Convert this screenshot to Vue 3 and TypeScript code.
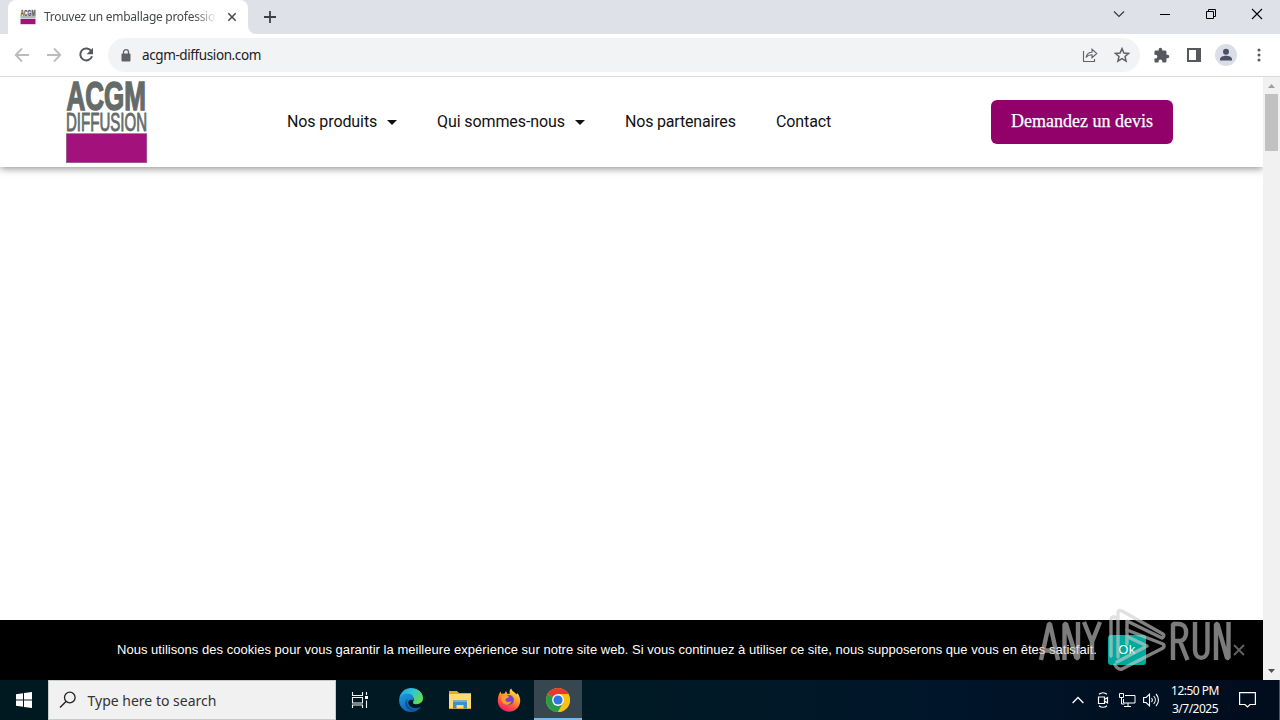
<script setup lang="ts">
interface NavItem {
  label: string
  menu: boolean
  cls: string
}

const navItems: NavItem[] = [
  { label: 'Nos produits', menu: true, cls: 'produits' },
  { label: 'Qui sommes-nous', menu: true, cls: 'sommes' },
  { label: 'Nos partenaires', menu: false, cls: 'partenaires' },
  { label: 'Contact', menu: false, cls: 'contact' },
]
</script>

<template>
  <div class="screen">
    <div class="tabstrip">
      <div class="tab">
        <svg class="favicon" width="16" height="16" viewBox="0 0 16 16">
          <text x="0.5" y="6.6" font-size="8.5" font-weight="700" fill="#555" stroke="#555" stroke-width="0.3" textLength="15" lengthAdjust="spacingAndGlyphs">ACGM</text>
          <rect x="0.5" y="7" width="15" height="2.6" fill="#b5b5b5" />
          <rect x="0.5" y="10" width="15" height="5.2" fill="#a3127c" />
        </svg>
        <span class="tab-title">Trouvez un emballage professionnel</span>
        <svg class="tab-close" width="10" height="10" viewBox="0 0 10 10"><path d="M1.3 1.3l7.4 7.4M8.7 1.3L1.3 8.7" stroke="#45494d" stroke-width="1.5" /></svg>
      </div>
      <svg class="tab-curve" width="8" height="8" viewBox="0 0 8 8"><path d="M0 0v8h8A8 8 0 0 1 0 0z" fill="#fff" /></svg>
      <svg class="new-tab" width="14" height="14" viewBox="0 0 14 14"><path d="M7 1v12M1 7h12" stroke="#3c4043" stroke-width="1.8" /></svg>
      <div class="window-controls">
        <svg width="46" height="28" viewBox="0 0 46 28"><path d="M18 11.5l5 5 5-5" fill="none" stroke="#333" stroke-width="1.1" /></svg>
        <svg width="46" height="28" viewBox="0 0 46 28"><path d="M18 14.5h10" stroke="#000" /></svg>
        <svg width="46" height="28" viewBox="0 0 46 28"><path d="M18.5 11.5h7v7h-7zM20.5 11.5v-2h7v7h-2" fill="none" stroke="#000" /></svg>
        <svg width="46" height="28" viewBox="0 0 46 28"><path d="M18 9l10 10M28 9l-10 10" stroke="#000" stroke-width="1.1" /></svg>
      </div>
    </div>

    <div class="toolbar">
      <svg class="tool" width="16" height="16" viewBox="0 0 16 16"><path d="M15 8H2M8 1.5L1.7 8 8 14.5" fill="none" stroke="#babcbe" stroke-width="1.8" /></svg>
      <svg class="tool" width="16" height="16" viewBox="0 0 16 16"><path d="M1 8h13M8 1.5L14.3 8 8 14.5" fill="none" stroke="#babcbe" stroke-width="1.8" /></svg>
      <svg class="tool" width="16" height="16" viewBox="0 0 16 16"><path d="M13.4 4.2A6 6 0 1 0 14 9.3" fill="none" stroke="#55595e" stroke-width="2" /><path d="M15 0.8v6.4H8.6z" fill="#55595e" /></svg>
      <div class="omnibox">
        <svg class="lock" width="10" height="13" viewBox="0 0 10 13"><rect x="0.5" y="4.5" width="9" height="8" rx="1" fill="#5f6368" /><path d="M2.5 5V3.2a2.5 2.5 0 0 1 5 0V5" fill="none" stroke="#5f6368" stroke-width="1.3" /></svg>
        <span class="url">acgm-diffusion.com</span>
        <svg class="share" width="16" height="16" viewBox="0 0 16 16"><path d="M1.5 4v10.5h11V12M4 10.5C4.7 7 7 5.2 10 5.2V2.3l4.8 4.2-4.8 4.2V7.8C7.5 7.8 5.5 8.5 4 10.5z" fill="none" stroke="#5f6368" stroke-width="1.1" /></svg>
        <svg class="star" width="16" height="16" viewBox="0 0 16 16"><path d="M8 1.6l1.9 4.4 4.7.4-3.6 3.1 1.1 4.6L8 11.7l-4.1 2.4L5 9.5 1.4 6.4 6.1 6z" fill="none" stroke="#5f6368" stroke-width="1.5" /></svg>
      </div>
      <svg class="puzzle" width="17" height="17" viewBox="0 0 24 24"><path d="M20.5 11H19V7a2 2 0 0 0-2-2h-4V3.5a2.500 2.500 0 0 0-5 0V5H4a2 2 0 0 0-2 2v3.800h1.500a2.700 2.700 0 0 1 0 5.400H2V20a2 2 0 0 0 2 2h3.800v-1.500a2.700 2.700 0 0 1 5.400 0V22H17a2 2 0 0 0 2-2v-4h1.500a2.500 2.500 0 0 0 0-5z" fill="#55595e" /></svg>
      <svg class="panel" width="14" height="14" viewBox="0 0 14 14"><path d="M0 0h14v14H0zM2 2v10h7V2z" fill="#55595e" fill-rule="evenodd" /></svg>
      <svg class="avatar" width="22" height="22" viewBox="0 0 22 22"><circle cx="11" cy="11" r="11" fill="#dcdee7" /><circle cx="11" cy="7.7" r="3" fill="#4b5165" /><path d="M5 16.5v-1.3c0-2.3 3.5-3.4 6-3.4s6 1.1 6 3.4v1.3z" fill="#4b5165" /></svg>
      <svg class="dots" width="4" height="16" viewBox="0 0 4 16"><circle cx="2" cy="3" r="1.5" fill="#55595e" /><circle cx="2" cy="8" r="1.5" fill="#55595e" /><circle cx="2" cy="13" r="1.5" fill="#55595e" /></svg>
    </div>

    <div class="viewport">
      <div class="page">
        <header class="site-header">
          <svg class="logo" width="82" height="84" viewBox="0 0 82 84">
            <text x="0.5" y="29.8" font-size="41" font-weight="700" fill="#656b69" stroke="#656b69" stroke-width="1.5" textLength="79.5" lengthAdjust="spacingAndGlyphs">ACGM</text>
            <text x="0" y="51.3" font-size="25" fill="#656b69" stroke="#656b69" stroke-width="0.9" textLength="81" lengthAdjust="spacingAndGlyphs">DIFFUSION</text>
            <rect x="0.3" y="53.7" width="80.5" height="29" fill="#a3127c" stroke="#8d6085" stroke-width="0.6" />
          </svg>
          <nav class="nav">
            <a v-for="item in navItems" :key="item.label" class="nav-item" :class="item.cls">
              <span>{{ item.label }}</span>
              <svg v-if="item.menu" width="10" height="5" viewBox="0 0 10 5"><path d="M0 0h10L5 5z" fill="#111" /></svg>
            </a>
          </nav>
          <a class="quote-button">Demandez un devis</a>
        </header>
        <main class="content"></main>
        <div class="cookie-bar">
          <span class="cookie-text">Nous utilisons des cookies pour vous garantir la meilleure expérience sur notre site web. Si vous continuez à utiliser ce site, nous supposerons que vous en êtes satisfait.</span>
          <span class="cookie-ok">Ok</span>
          <svg class="cookie-close" width="12" height="12" viewBox="0 0 12 12"><path d="M1 1l10 10M11 1L1 11" stroke="#626262" stroke-width="1.8" /></svg>
        </div>
      </div>
      <div class="scrollbar">
        <svg width="17" height="17" viewBox="0 0 17 17"><path d="M5 11h7L8.5 7z" fill="#a0a0a0" /></svg>
        <div class="thumb"></div>
        <svg class="arrow-down" width="17" height="17" viewBox="0 0 17 17"><path d="M5 6h7l-3.5 4z" fill="#505050" /></svg>
      </div>
    </div>

    <div class="taskbar">
      <div class="start">
        <svg width="16" height="16" viewBox="0 0 16 16"><path d="M0 2.3L7 1.3V7.5H0zM8 1.1L16 0v7.5H8zM0 8.5h7v6.2l-7-1zM8 8.5h8V16l-8-1.1z" fill="#fff" /></svg>
      </div>
      <div class="search">
        <svg width="18" height="18" viewBox="0 0 18 18"><circle cx="10.8" cy="6.5" r="5.3" fill="none" stroke="#222" stroke-width="1.3" /><path d="M7 10.5L1 16.5" stroke="#222" stroke-width="1.4" /></svg>
        <span>Type here to search</span>
      </div>
      <div class="app">
        <svg width="18" height="18" viewBox="0 0 18 18"><path d="M1.5 1v3.500h10V1M1.500 17v-3h10v3M1.500 6.500h10v5.500h-10zM15.500 1v3M15.500 9.500V17" fill="none" stroke="#f1f3f4" stroke-width="1.1" /><rect x="14" y="5" width="3" height="3" fill="#fff" /></svg>
      </div>
      <div class="app edge">
        <svg width="24" height="24" viewBox="0 0 24 24">
          <defs>
            <linearGradient id="edgeTop" x1="0" y1="0" x2="1" y2="0.5"><stop offset="0" stop-color="#1c9de0" /><stop offset="0.55" stop-color="#32c5d0" /><stop offset="1" stop-color="#62d957" /></linearGradient>
            <linearGradient id="edgeLow" x1="0" y1="0" x2="0.7" y2="1"><stop offset="0" stop-color="#1b9de2" /><stop offset="1" stop-color="#1059a8" /></linearGradient>
          </defs>
          <path d="M0.3 10C1.5 4 6.3 0 12 0c7 0 12 4.500 12 10 0 4-3 6.200-6.500 6.200-3.200 0-4-1.200-3.300-2.300C16 10.500 13.500 7 9 7 5 7 2 8.500.3 10z" fill="url(#edgeTop)" />
          <path d="M.2 11C1.300 7 5.500 5.200 9 5.500c4.500.3 6.500 3.800 5 6.800-2.500-1.800-6 .7-4.300 4.200 2 4 8 4.800 12.500 2C20 22 16.500 24 12 24 5.300 24-.7 18.500.2 11z" fill="url(#edgeLow)" />
          <path d="M9 10.500c-2.500 4 .5 11 7.500 12C7 24 3 14.500 9 10.500z" fill="#0f4a8c" opacity="0.8" />
        </svg>
      </div>
      <div class="app folder">
        <svg width="22" height="20" viewBox="0 0 22 20"><path d="M0 1h8l2 2h12v16H0z" fill="#e9a928" /><path d="M0 4h22v14H0z" fill="#ffdc72" /><path d="M4 18.5v-8h14v8h-3.500v-3.500h-7v3.500z" fill="#3b91cf" /><path d="M4 10.5h14V12H4z" fill="#65b2df" /></svg>
      </div>
      <div class="app firefox">
        <svg width="24" height="24" viewBox="0 0 24 24">
          <defs><linearGradient id="fox" x1="0.8" y1="0.05" x2="0.3" y2="1"><stop offset="0" stop-color="#ffe64a" /><stop offset="0.4" stop-color="#ff9a2b" /><stop offset="0.7" stop-color="#ff4d42" /><stop offset="1" stop-color="#eb1d73" /></linearGradient></defs>
          <path d="M3.5 3.5l.8 2.200L7.500 5.500 9 3l1.500 3 2.500-.5C12 3.200 13 1.500 14.300.5c.5 3 3.700 3.500 5.200 6l.8-1.500c2 2.500 3 5 2.900 8C22.900 19.500 18 23.700 12 23.700S.8 19 .8 12.800C.8 9.500 1.700 6 3.500 3.500z" fill="url(#fox)" />
          <circle cx="12" cy="12" r="4.9" fill="#7742cf" />
          <path d="M5 7.500c3-1.500 5.500-.5 7 1.200-1 1.800-3.500 1-3.500 3.300 0 2 3.500 2.800 6 1-1 4-6.500 5-9 1.500C4 12.500 4 9.500 5 7.500z" fill="#ff9b31" />
        </svg>
      </div>
      <div class="app active">
        <svg width="24" height="24" viewBox="0 0 24 24">
          <circle cx="12" cy="12" r="12" fill="#fbc116" />
          <path d="M12 12L1.610 6A12 12 0 0 1 22.390 6H12z" fill="#e33b2e" />
          <path d="M1.610 6A12 12 0 0 0 12 24l5.200-9L12 12z" fill="#269c4b" />
          <path d="M12 24A12 12 0 0 0 22.390 6H12l5.200 9z" fill="#fbc116" />
          <circle cx="12" cy="12" r="5.9" fill="#fff" /><circle cx="12" cy="12" r="4.6" fill="#2f75e8" />
        </svg>
      </div>
      <div class="tray">
        <svg width="12" height="8" viewBox="0 0 12 8"><path d="M0.6 7L6 1.500 11.400 7" fill="none" stroke="#fff" stroke-width="1.3" /></svg>
        <svg class="meet" width="12" height="16" viewBox="0 0 12 16"><path d="M2 2.300c2.300-2 5.700-2 8 0M2 13.700c2.300 2 5.700 2 8 0M1.500 5h6v6.500h-6zM7.500 7.500l3-2v5.500l-3-2" fill="none" stroke="#fff" stroke-width="1.2" /></svg>
        <svg class="network" width="17" height="14" viewBox="0 0 17 14"><path d="M6 2.500h10v7.500H4.500V6M5 13.500h7M9 10v3.500M.5.500h4v4h-4zM2.500 4.500V11h3" fill="none" stroke="#fff" /></svg>
        <svg class="volume" width="17" height="14" viewBox="0 0 17 14"><path d="M.6 4.500h2.500L6.500 1.200v11.600L3.100 9.500H.6zM8.500 5c1 1.200 1 2.800 0 4M10.700 3c2.100 2.300 2.100 5.700 0 8M13 1c3.300 3.400 3.300 8.600 0 12" fill="none" stroke="#fff" stroke-width="1.1" /></svg>
        <div class="clock"><span class="time">12:50 PM</span><span class="date">3/7/2025</span></div>
        <svg class="notice" width="17" height="16" viewBox="0 0 17 16"><path d="M.6.6h15.800v11.900H11L8.500 15 6 12.500H.6z" fill="none" stroke="#fff" stroke-width="1.2" /></svg>
      </div>
      <div class="show-desktop"></div>
    </div>

    <svg class="watermark" width="200" height="66" viewBox="0 0 200 66">
      <g class="letters" fill="none" stroke="#c8c8c8" stroke-width="4.4" stroke-linejoin="bevel">
        <path d="M3 53L11 17h1L20 53M6 43.500h11M26.500 53V17h1.500L38.500 51H40V15M46 15L54 35V53M62 15L54 35" />
        <path d="M135 53V17h6c9.500 0 9.500 17 0 17h-6M142 34l7.500 19M157 15v28c0 10.500 12.500 10.500 12.500 0V15M178 53V17h1.500L189 51h1.500V15" />
      </g>
      <g class="mark" fill="none" stroke="#cfcfcf" stroke-width="3.4" stroke-linejoin="round" stroke-linecap="round">
        <path d="M73 49V12q2-4 5-1M80 50V6q0-4 4-2l41 23q2 2-1 4L89 14V37" />
        <path d="M89 23l36 14q2 2 0 4L84 62q-4 1-7-4M79 55l30-16-19-9" />
      </g>
    </svg>
  </div>
</template>

<style>
body {
  margin: 0;
  overflow: hidden;
}
</style>

<style scoped>
.screen {
  position: relative;
  width: 1280px;
  height: 720px;
  overflow: hidden;
  background: #fff;
  font-family: "Liberation Sans", sans-serif;
  display: flex;
  flex-direction: column;
}
svg { display: block; flex: none; }
span { white-space: nowrap; }
.favicon, .logo { overflow: visible; }
.tabstrip {
  height: 34px;
  background: #dee1e8;
  display: flex;
  flex: none;
}
.tab {
  width: 240px;
  margin-left: 8px;
  background: #fff;
  border-radius: 8px 8px 0 0;
  display: flex;
  align-items: center;
  box-sizing: border-box;
  padding-left: 12px;
}
.tab-title {
  width: 171px;
  margin-left: 8px;
  overflow: hidden;
  font: 12px/18px "Noto Sans", sans-serif;
  color: #45484c;
  letter-spacing: -0.28px;
  mask-image: linear-gradient(90deg, #000 150px, transparent 173px);
}
.tab-close { margin-left: 12px; }
.tab-curve { align-self: flex-end; }
.new-tab { margin: 10px 0 0 7px; }
.window-controls { display: flex; margin-left: auto; }
.toolbar {
  height: 42px;
  flex: none;
  display: flex;
  align-items: center;
  padding-left: 14px;
  border-bottom: 1px solid #d9dadc;
}
.tool { margin-right: 16px; }
.omnibox {
  width: 1032px;
  height: 34px;
  margin-left: -2px;
  border-radius: 17px;
  background: #f1f3f5;
  display: flex;
  align-items: center;
}
.lock { margin-left: 13px; }
.url {
  margin-left: 11px;
  font: 13.5px/20px "Noto Sans", sans-serif;
  letter-spacing: -0.4px;
  color: #202124;
}
.share { margin-left: auto; }
.star { margin: 0 10px 0 16px; }
.puzzle { margin-left: 13px; }
.panel { margin-left: 17px; }
.avatar { margin-left: 14px; }
.dots { margin-left: 20px; }
.viewport { height: 603px; flex: none; display: flex; }
.page { width: 1263px; display: flex; flex-direction: column; }
.site-header {
  height: 90px;
  flex: none;
  display: flex;
  align-items: center;
  box-shadow: 0 1px 8px rgba(0, 0, 0, 0.5);
  clip-path: inset(0 0 -12px 0);
}
.logo { margin-left: 66px; }
.nav {
  margin-left: 139px;
  width: 704px;
  display: flex;
  gap: 40px;
}
.nav-item {
  display: flex;
  align-items: center;
  justify-content: space-between;
  box-sizing: border-box;
  font: 16px/20px Roboto, sans-serif;
  letter-spacing: -0.1px;
  color: #111;
}
.produits { width: 110px; }
.sommes { width: 148px; }
.partenaires { width: 111px; letter-spacing: -0.18px; }
.contact { width: 56px; }
.quote-button {
  width: 182px;
  height: 44px;
  line-height: 43px;
  border-radius: 6px;
  background: #920069;
  color: #fff;
  text-align: center;
  font-family: "Liberation Serif", serif;
  font-size: 18px;
  -webkit-text-stroke: 0.25px #fff;
  white-space: nowrap;
}
.content { flex: 1; }
.cookie-bar {
  height: 60px;
  background: #000;
  display: flex;
  align-items: center;
  flex: none;
}
.cookie-text {
  width: 980px;
  margin: -2px 0 0 117px;
  color: #fff;
  font-size: 13px;
  letter-spacing: 0.03px;
}
.cookie-ok {
  width: 38px;
  height: 30px;
  margin-left: 11px;
  border-radius: 3px;
  background: #00a99d;
  color: #fff;
  text-align: center;
  font-size: 13px;
  letter-spacing: 0.5px;
  line-height: 29px;
}
.cookie-close { margin-left: 87px; }
.scrollbar {
  width: 17px;
  background: #f1f1f1;
  display: flex;
  flex-direction: column;
}
.thumb { width: 13px; height: 57px; margin-left: 2px; background: #c1c1c1; }
.arrow-down { margin-top: auto; }
.taskbar {
  height: 40px;
  display: flex;
  flex: none;
  background: linear-gradient(90deg, #001820 0%, #001a25 50%, #00152a 75%, #010c1c 100%);
}
.start { width: 48px; display: flex; align-items: center; justify-content: center; }
.search {
  width: 288px;
  box-sizing: border-box;
  border: 1px solid #c8cbcc;
  background: #f1f1f1;
  display: flex;
  align-items: center;
  padding-left: 10px;
  gap: 10.5px;
  font: 14px/20px "Noto Sans", sans-serif;
  color: #333;
}
.search span { margin-top: 2px; }
.app { width: 48px; display: flex; align-items: center; justify-content: center; }
.edge, .folder, .firefox { width: 49px; }
.edge { margin-left: 2px; }
.firefox { margin-right: 1px; }
.active { background: #36474f; box-sizing: border-box; border-bottom: 2px solid #76b9ed; padding-top: 2px; }
.tray { margin-left: auto; display: flex; align-items: center; color: #fff; }
.meet { margin-left: 13px; }
.network { margin-left: 10px; }
.volume { margin-left: 7px; }
.clock {
  width: 58px;
  margin-left: 6px;
  display: flex;
  flex-direction: column;
  align-items: center;
  font: 12px/18px "Noto Sans", sans-serif;
  letter-spacing: -0.5px;
}
.notice { margin: 0 24px 0 15px; }
.show-desktop { width: 0; border-left: 1px solid #4c5561; margin-left: -1px; }
.watermark { position: absolute; left: 1038px; top: 607px; }
.letters { opacity: 0.62; }
.mark { opacity: 0.62; }
</style>
